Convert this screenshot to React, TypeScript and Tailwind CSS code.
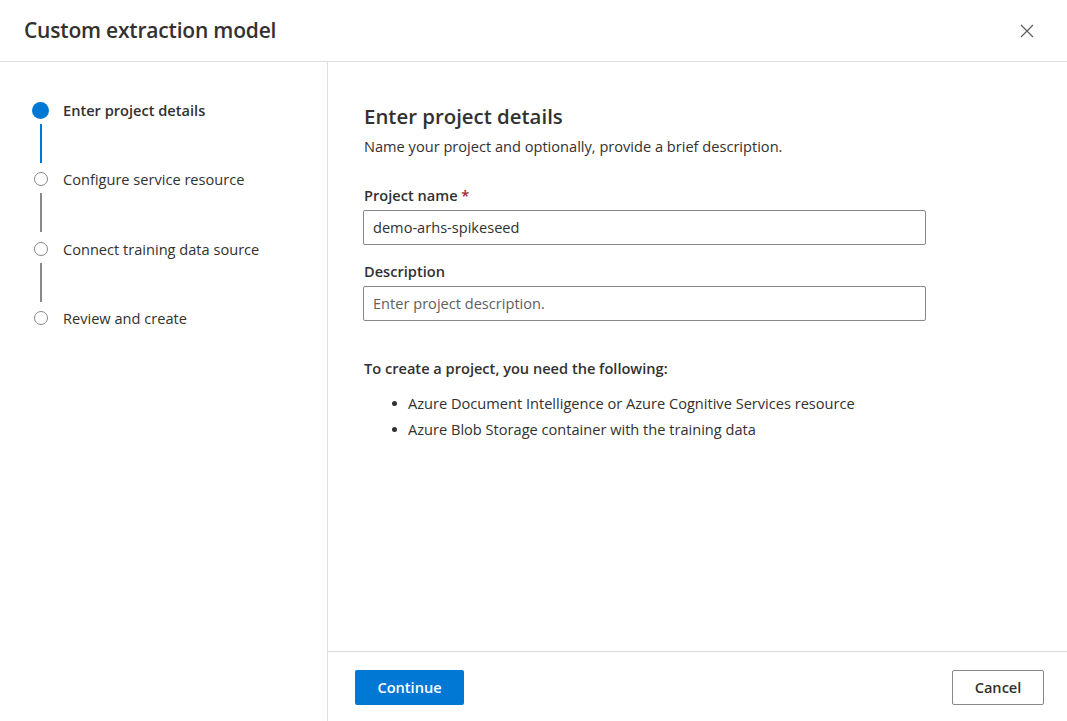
import React from 'react';

const steps = [
  'Enter project details',
  'Configure service resource',
  'Connect training data source',
  'Review and create',
];

const App: React.FC = () => {
  return (
    <div
      className="h-[721px] w-full flex flex-col bg-white text-[#323130] overflow-hidden"
      style={{ fontFamily: '"Open Sans", "Noto Sans", sans-serif' }}
    >
      {/* Header */}
      <div className="h-[62px] shrink-0 flex items-center justify-between pl-6 pr-[32px] border-b border-[#e1dfdd]">
        <h1 className="text-[21px] font-semibold tracking-[-0.2px]">Custom extraction model</h1>
        <button className="w-4 h-4 flex items-center justify-center text-[#605e5c]">
          <svg width="14" height="14" viewBox="0 0 14 14" fill="none" stroke="currentColor" strokeWidth="1.2">
            <path d="M1 1L13 13M13 1L1 13" />
          </svg>
        </button>
      </div>

      <div className="flex flex-1 min-h-0">
        {/* Stepper */}
        <div className="w-[328px] shrink-0 border-r border-[#e1dfdd] pt-[38px] pl-[32px]">
          {steps.map((s, i) => {
            const active = i === 0;
            return (
              <div key={s} className="flex">
                <div className="w-[17px] flex flex-col items-center mr-[14px]">
                  <div className="h-[20px] flex items-center">
                    {active ? (
                      <div className="w-[17px] h-[17px] rounded-full bg-[#0078d4]" />
                    ) : (
                      <div className="w-[14px] h-[14px] rounded-full border border-[#8a8886] bg-white" />
                    )}
                  </div>
                  {i < steps.length - 1 && (
                    <div
                      className={`w-[2px] h-[39px] mt-[4px] mb-[6.3px] ${active ? 'bg-[#0078d4]' : 'bg-[#8a8886]'}`}
                    />
                  )}
                </div>
                <div
                  className={`text-[14.6px] leading-[20px] ${active ? 'font-semibold' : ''}`}
                >
                  {s}
                </div>
              </div>
            );
          })}
        </div>

        {/* Content */}
        <div className="flex-1 flex flex-col min-w-0">
          <div className="flex-1 pl-[36px] pt-[40px]">
            <h2 className="text-[20.4px] font-semibold leading-[28px]">Enter project details</h2>
            <p className="text-[14.6px] leading-[20px] mt-[6px]">
              Name your project and optionally, provide a brief description.
            </p>

            <div className="w-[563px] mt-[29px] -ml-px">
              <label className="block text-[14.6px] font-semibold leading-[20px] pl-px">
                Project name <span className="text-[#a4262c]">*</span>
              </label>
              <div className="mt-[5px] h-[35px] border border-[#8a8886] rounded-[2px] flex items-center px-[9px] text-[14.6px]">
                demo-arhs-spikeseed
              </div>

              <label className="block text-[14.6px] font-semibold leading-[20px] mt-[16px] pl-px">
                Description
              </label>
              <div className="mt-[5px] h-[35px] border border-[#8a8886] rounded-[2px] flex items-center px-[9px] text-[14.6px] text-[#605e5c]">
                Enter project description.
              </div>
            </div>

            <p className="text-[14.6px] font-semibold leading-[20px] mt-[37px]">
              To create a project, you need the following:
            </p>
            <ul className="mt-[12px] pl-[28px] text-[14.6px] leading-[26px]">
              <li className="flex items-center">
                <span className="w-[5px] h-[5px] rounded-full bg-[#323130] mr-[11px]" />
                Azure Document Intelligence or Azure Cognitive Services resource
              </li>
              <li className="flex items-center">
                <span className="w-[5px] h-[5px] rounded-full bg-[#323130] mr-[11px]" />
                Azure Blob Storage container with the training data
              </li>
            </ul>
          </div>

          {/* Footer */}
          <div className="h-[70px] shrink-0 border-t border-[#e1dfdd] flex items-start justify-between pt-[18px] pl-[27px] pr-[23px]">
            <button className="h-[35px] w-[109px] bg-[#0078d4] text-white text-[14.6px] font-semibold rounded-[2px]">
              Continue
            </button>
            <button className="h-[35px] w-[92px] border border-[#8a8886] text-[14.6px] font-semibold rounded-[2px] bg-white">
              Cancel
            </button>
          </div>
        </div>
      </div>
    </div>
  );
};

export default App;
